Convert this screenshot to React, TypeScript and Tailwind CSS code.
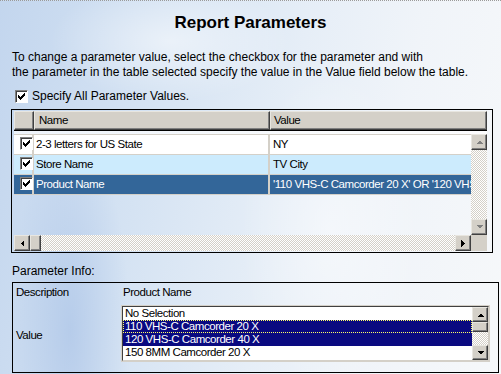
import React from 'react';

type Dir = 'up' | 'down' | 'left' | 'right';

const raised =
  'border border-t-[#e8e6e0] border-l-[#e8e6e0] border-r-[#404040] border-b-[#404040] bg-[#d4d0c8] shadow-[inset_-1px_-1px_0_#808080]';
const checker =
  'bg-[repeating-conic-gradient(#d4d0c8_0_25%,#ffffff_0_50%)] [background-size:2px_2px]';

function Arrow({ dir, disabled }: { dir: Dir; disabled?: boolean }) {
  const fill = disabled ? '#808080' : '#000000';
  const pts: Record<Dir, string> = {
    up: '0,4 7,4 3.5,0.5',
    down: '0,0 7,0 3.5,3.5',
    left: '4,0 4,7 0.5,3.5',
    right: '0,0 0,7 3.5,3.5',
  };
  const vertical = dir === 'up' || dir === 'down';
  return (
    <svg
      width={vertical ? 7 : 4}
      height={vertical ? 4 : 7}
      viewBox={vertical ? '0 0 7 4' : '0 0 4 7'}
      shapeRendering="crispEdges"
    >
      <polygon points={pts[dir]} fill={fill} />
    </svg>
  );
}

function ScrollButton({ dir, disabled, className = '' }: { dir: Dir; disabled?: boolean; className?: string }) {
  return (
    <div className={`flex shrink-0 items-center justify-center ${raised} ${className}`}>
      <Arrow dir={dir} disabled={disabled} />
    </div>
  );
}

function CheckMark() {
  // classic 7x7 windows check
  const cols = [2, 3, 4, 3, 2, 1, 0];
  return (
    <svg width="7" height="7" viewBox="0 0 7 7" shapeRendering="crispEdges">
      {cols.map((y, x) => (
        <rect key={x} x={x} y={y} width="1" height="3" fill="#000" />
      ))}
    </svg>
  );
}

function Checkbox({ className = '' }: { className?: string }) {
  return (
    <span
      className={`flex h-[13px] w-[13px] shrink-0 items-center justify-center border border-t-[#808080] border-l-[#808080] border-r-white border-b-white bg-white shadow-[inset_1px_1px_0_#404040] ${className}`}
    >
      <CheckMark />
    </span>
  );
}

const rows = [
  { name: '2-3 letters for US State', value: 'NY', bg: 'bg-white', text: 'text-black' },
  { name: 'Store Name', value: 'TV City', bg: 'bg-[#ccebfd]', text: 'text-black' },
  {
    name: 'Product Name',
    value: "'110 VHS-C Camcorder 20 X' OR '120 VHS-C Camcorder 40 X'",
    bg: 'bg-[#336699]',
    text: 'text-white',
  },
];

const options = [
  { label: 'No Selection', selected: false, focus: false },
  { label: '110 VHS-C Camcorder 20 X', selected: true, focus: true },
  { label: '120 VHS-C Camcorder 40 X', selected: true, focus: false },
  { label: '150 8MM Camcorder 20 X', selected: false, focus: false },
];

export default function App() {
  return (
    <div className="relative h-[374px] w-[501px] overflow-hidden border-t border-dotted border-[#9a9a9a] bg-[linear-gradient(100deg,#c3d6ee_0%,#d5e3f3_30%,#e6eef7_55%,#f0f4f9_75%,#f6f8fa_100%)] font-['Liberation_Sans',Arial,sans-serif] text-black">
      {/* cloudy streaks */}
      <div className="pointer-events-none absolute inset-0 bg-[radial-gradient(ellipse_60px_200px_at_70px_330px,rgba(150,180,225,0.45),transparent),radial-gradient(ellipse_120px_60px_at_170px_40px,rgba(255,255,255,0.5),transparent),radial-gradient(ellipse_90px_160px_at_330px_230px,rgba(255,255,255,0.45),transparent)]" />

      <div className="relative">
        <h1 className="mt-[12px] h-[20px] text-center text-[17px] font-bold leading-[20px]">Report Parameters</h1>

        <p className="ml-[12px] mt-[17px] text-[12px] leading-[15px]">
          To change a parameter value, select the checkbox for the parameter and with
          <br />
          the parameter in the table selected specify the value in the Value field below the table.
        </p>

        <div className="ml-[15px] mt-[9px] flex h-[14px] items-center gap-[4px] text-[12px]">
          <Checkbox />
          <span>Specify All Parameter Values.</span>
        </div>

        {/* parameter table */}
        <div className="ml-[11px] mt-[6px] flex h-[144px] w-[482px] flex-col border border-black pb-[1px] pl-[2px] pr-[5px] pt-[1px] text-[11.5px] tracking-[-0.45px]">
          <div className="flex h-[20px] shrink-0 border-b border-black">
            <div className={`w-[20px] ${raised}`} />
            <div className={`flex w-[236px] items-center pl-[4px] ${raised}`}>Name</div>
            <div className={`flex flex-1 items-center pl-[3px] ${raised}`}>Value</div>
          </div>
          <div className="h-[3px] shrink-0 bg-white/70" />
          <div className="flex h-[101px] shrink-0">
            <div className="min-w-0 flex-1 border-t border-[#d4d0c8]">
              {rows.map((r) => (
                <div key={r.name} className={`flex h-[20px] border-b border-[#d4d0c8] ${r.bg} ${r.text}`}>
                  <div className="w-[20px] shrink-0 border-r-2 border-[#d4d0c8] pl-[6px] pt-[2px]">
                    <Checkbox />
                  </div>
                  <div className="flex w-[236px] shrink-0 items-center border-r-2 border-[#d4d0c8] pl-[2px]">
                    {r.name}
                  </div>
                  <div className="flex min-w-0 flex-1 items-center overflow-hidden whitespace-nowrap pl-[3px]">
                    {r.value}
                  </div>
                </div>
              ))}
            </div>
            <div className="flex w-[16px] shrink-0 flex-col">
              <ScrollButton dir="up" disabled className="h-[16px]" />
              <div className={`flex-1 ${checker}`} />
              <ScrollButton dir="down" disabled className="h-[16px]" />
            </div>
          </div>
          <div className="flex h-[16px] shrink-0">
            <ScrollButton dir="left" className="w-[16px]" />
            <div className={`w-[11px] shrink-0 ${raised}`} />
            <div className={`flex-1 ${checker}`} />
            <ScrollButton dir="right" className="w-[16px]" />
            <div className="w-[16px] shrink-0 bg-[#d4d0c8]" />
          </div>
        </div>

        <div className="ml-[12px] mt-[11px] h-[15px] text-[12px] leading-[15px]">Parameter Info:</div>

        {/* parameter info box */}
        <div className="ml-[12px] mt-[3px] h-[91px] w-[487px] border border-black pl-[3px] text-[11.5px] tracking-[-0.45px]">
          <div className="flex h-[19px] items-center">
            <div className="w-[106px] shrink-0">Description</div>
            <div className="pl-[1px]">Product Name</div>
          </div>
          <div className="mt-[3px] flex">
            <div className="flex w-[105px] shrink-0 items-center pt-[4px]">Value</div>
            <div className="h-[57px] w-[369px] border border-[#d4d0c8]">
              <div className="flex h-full border border-t-[#404040] border-l-[#404040] border-r-[#d4d0c8] border-b-[#d4d0c8] bg-white">
                <div className="min-w-0 flex-1">
                  {options.map((o) => (
                    <div
                      key={o.label}
                      className={`h-[13px] whitespace-nowrap pl-[2px] leading-[13px] ${
                        o.selected ? 'bg-[#0a0a80] text-white' : 'text-black'
                      } ${o.focus ? 'outline-1 -outline-offset-1 outline-dotted outline-[#ffff66]' : ''}`}
                    >
                      {o.label}
                    </div>
                  ))}
                </div>
                <div className="flex w-[16px] shrink-0 flex-col">
                  <ScrollButton dir="up" className="h-[15px]" />
                  <div className={`h-[10px] shrink-0 ${raised}`} />
                  <div className={`flex-1 ${checker}`} />
                  <ScrollButton dir="down" className="h-[15px]" />
                </div>
              </div>
            </div>
          </div>
        </div>
      </div>
    </div>
  );
}
